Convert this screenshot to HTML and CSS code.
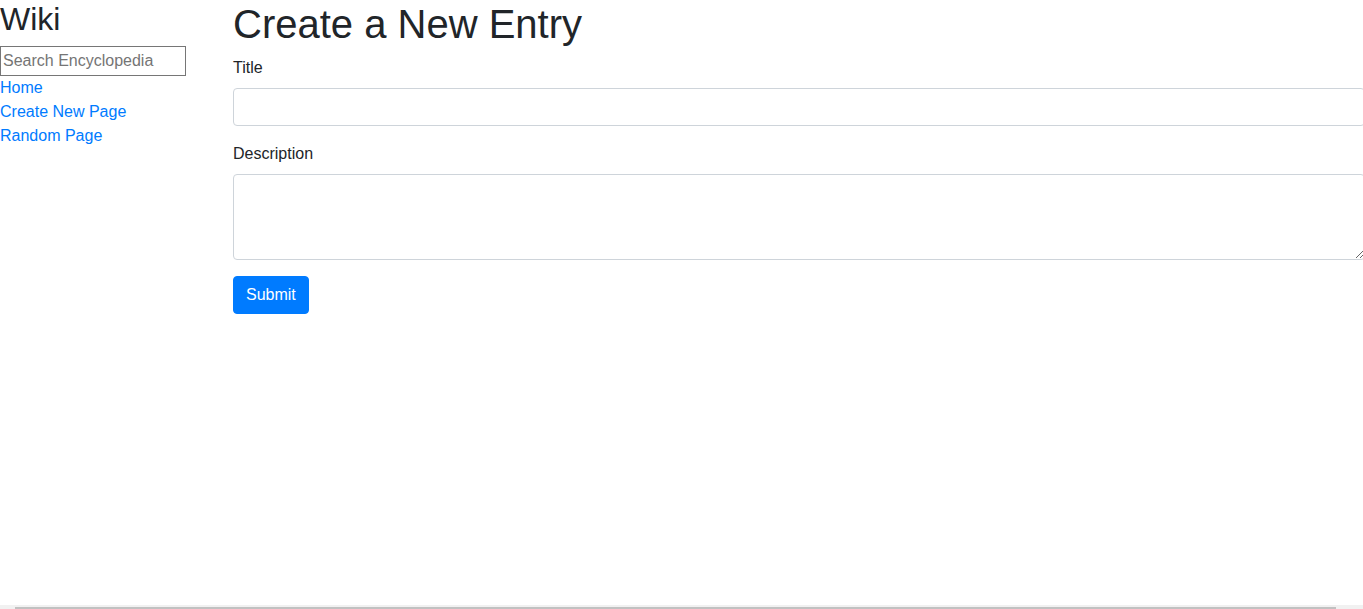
FILE: index.html
```html
<!DOCTYPE html>
<html lang="en">
<head>
<meta charset="utf-8">
<title>Create New Entry</title>
<link rel="stylesheet" href="styles.css">
</head>
<body>
<div class="layout">
  <aside class="sidebar">
    <h2 class="brand">Wiki</h2>
    <form class="search-form">
      <input class="search" type="text" name="q" placeholder="Search Encyclopedia">
    </form>
    <div class="nav-item"><a href="#">Home</a></div>
    <div class="nav-item"><a href="#">Create New Page</a></div>
    <div class="nav-item"><a href="#">Random Page</a></div>
  </aside>
  <main class="main">
    <h1 class="page-title">Create a New Entry</h1>
    <form>
      <div class="form-group">
        <label for="title">Title</label>
        <input id="title" class="form-control" type="text" name="title">
      </div>
      <div class="form-group">
        <label for="content">Description</label>
        <textarea id="content" class="form-control textarea" rows="3" name="content"></textarea>
      </div>
      <button class="btn" type="submit">Submit</button>
    </form>
  </main>
</div>
<div class="hscroll"><div class="hscroll-thumb"></div></div>
</body>
</html>
```

FILE: styles.css
```css
html {
  overflow: hidden;
}

body {
  margin: 0;
  font-family: "Liberation Sans", Arial, sans-serif;
  font-size: 16px;
  line-height: 1.5;
  color: #212529;
  background: #fff;
}

.layout {
  display: grid;
  grid-template-columns: 233px 1132px;
}

.sidebar {
  padding-right: 15px;
}

.brand {
  margin: 0 0 8px;
  font-size: 32px;
  font-weight: 400;
  line-height: 1.2;
}

.search-form {
  margin: 0;
}

.search {
  display: block;
  box-sizing: border-box;
  width: 186px;
  height: 30px;
  margin: 0;
  padding: 1px 2px;
  border: 1px solid #767676;
  border-radius: 0;
  font-family: inherit;
  font-size: 16px;
  line-height: 24px;
  color: #212529;
  background: #fff;
}

.search::placeholder {
  color: #757575;
}

.nav-item a {
  color: #007bff;
  text-decoration: none;
}

.page-title {
  margin: 0 0 8px;
  font-size: 40px;
  font-weight: 400;
  line-height: 1.2;
}

.form-group {
  margin-bottom: 16px;
}

.form-group label {
  display: inline-block;
  margin-bottom: 8px;
}

.form-control {
  display: block;
  box-sizing: border-box;
  width: 100%;
  height: 38px;
  margin: 0;
  padding: 6px 12px;
  font-family: inherit;
  font-size: 16px;
  line-height: 1.5;
  color: #495057;
  background: #fff;
  border: 1px solid #ced4da;
  border-radius: 4px;
}

.textarea {
  height: 86px;
  resize: vertical;
}

.btn {
  display: inline-block;
  margin: 0;
  padding: 6px 12px;
  font-family: inherit;
  font-size: 16px;
  line-height: 1.5;
  color: #fff;
  background: #007bff;
  border: 1px solid #007bff;
  border-radius: 4px;
  cursor: pointer;
}

.hscroll {
  position: fixed;
  left: 0;
  right: 0;
  bottom: 0;
  height: 4px;
  background: #f1f1f1;
}

.hscroll-thumb {
  position: absolute;
  left: 15px;
  bottom: 0;
  width: 1321px;
  height: 2px;
  background: #c1c1c1;
}
```
